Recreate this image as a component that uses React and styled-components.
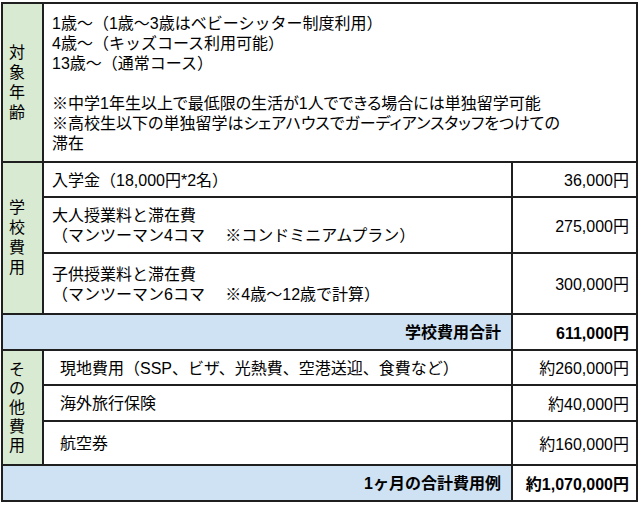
import React from "react";
import styled, { createGlobalStyle } from "styled-components";

const Global = createGlobalStyle`
  html, body { margin: 0; padding: 0; background: #ffffff; }
  body {
    font-family: "Liberation Sans", "Noto Sans CJK JP", sans-serif;
    color: #000;
  }
`;

const Page = styled.div`
  padding: 2px 0 0 1px;
`;

const Table = styled.table`
  border-collapse: collapse;
  table-layout: fixed;
  width: 635px;
  font-size: 16px;
  line-height: 20px;
`;

const Label = styled.th`
  background: #d9ead3;
  border: 2px solid #1f1f1f;
  font-weight: normal;
  text-align: left;
  vertical-align: middle;
  padding: 0 0 0 6px;
`;

const LabelText = styled.span`
  display: block;
  width: 16px;
  word-break: break-all;
  line-height: ${(p) => p.$lh || 20}px;
`;

const Desc = styled.td`
  border: 2px solid #1f1f1f;
  background: #fff;
  vertical-align: middle;
  padding: ${(p) => (p.$top ? "10px 8px 7px" : "2px 8px 0")};
  padding-left: ${(p) => (p.$indent ? 16 : 8)}px;
  white-space: nowrap;
`;

const Note = styled.span`
  font-feature-settings: "palt";
`;

const Amount = styled.td`
  border: 2px solid #1f1f1f;
  background: #fff;
  text-align: right;
  vertical-align: middle;
  padding: 3px 7px 0 4px;
  font-weight: ${(p) => (p.$bold ? 700 : 400)};
  white-space: nowrap;
`;

const TotalLabel = styled.td`
  border: 2px solid #1f1f1f;
  background: #cfe2f3;
  text-align: right;
  font-weight: 700;
  vertical-align: middle;
  padding: 2px 10px 0;
`;

const Row = styled.tr`
  height: ${(p) => p.$h}px;
`;

export default function App() {
  return (
    <>
      <Global />
      <Page>
        <Table>
          <colgroup>
            <col style={{ width: 41 }} />
            <col style={{ width: 469 }} />
            <col style={{ width: 125 }} />
          </colgroup>
          <tbody>
            <Row $h={159}>
              <Label>
                <LabelText>対象年齢</LabelText>
              </Label>
              <Desc colSpan={2} $top>
                1歳～（1歳～3歳はベビーシッター制度利用）
                <br />
                4歳～（キッズコース利用可能）
                <br />
                13歳～（通常コース）
                <br />
                <br />
                <Note>
                  ※中学1年生以上で最低限の生活が1人でできる場合には単独留学可能
                  <br />
                  ※高校生以下の単独留学はシェアハウスでガーディアンスタッフをつけての
                  <br />
                  滞在
                </Note>
              </Desc>
            </Row>
            <Row $h={35}>
              <Label rowSpan={3}>
                <LabelText>学校費用</LabelText>
              </Label>
              <Desc>入学金（18,000円*2名）</Desc>
              <Amount>36,000円</Amount>
            </Row>
            <Row $h={56}>
              <Desc>
                大人授業料と滞在費
                <br />
                （マンツーマン4コマ　 ※コンドミニアムプラン）
              </Desc>
              <Amount>275,000円</Amount>
            </Row>
            <Row $h={61}>
              <Desc>
                子供授業料と滞在費
                <br />
                （マンツーマン6コマ　 ※4歳～12歳で計算）
              </Desc>
              <Amount>300,000円</Amount>
            </Row>
            <Row $h={36}>
              <TotalLabel colSpan={2}>学校費用合計</TotalLabel>
              <Amount $bold>611,000円</Amount>
            </Row>
            <Row $h={35}>
              <Label rowSpan={3}>
                <LabelText $lh={19}>その他費用</LabelText>
              </Label>
              <Desc $indent>現地費用（SSP、ビザ、光熱費、空港送迎、食費など）</Desc>
              <Amount>約260,000円</Amount>
            </Row>
            <Row $h={36}>
              <Desc $indent>海外旅行保険</Desc>
              <Amount>約40,000円</Amount>
            </Row>
            <Row $h={44}>
              <Desc $indent>航空券</Desc>
              <Amount>約160,000円</Amount>
            </Row>
            <Row $h={36}>
              <TotalLabel colSpan={2}>1ヶ月の合計費用例</TotalLabel>
              <Amount $bold>約1,070,000円</Amount>
            </Row>
          </tbody>
        </Table>
      </Page>
    </>
  );
}
